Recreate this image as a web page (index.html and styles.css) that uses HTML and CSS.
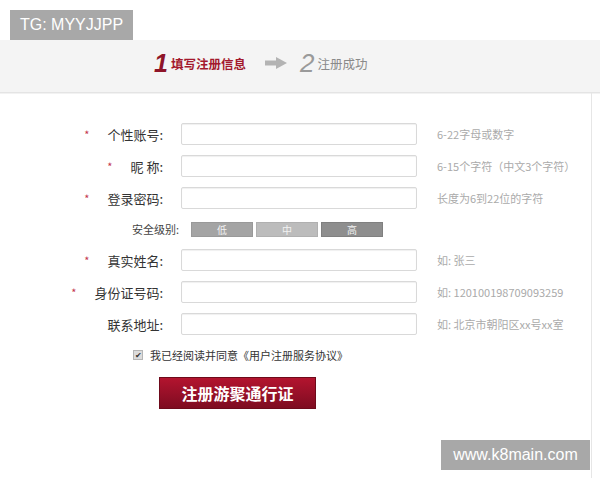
FILE: index.html
```html
<!DOCTYPE html>
<html lang="zh-CN">
<head>
<meta charset="utf-8">
<link rel="stylesheet" href="styles.css">
</head>
<body>
<div class="top">
  <span class="tg">TG: MYYJJPP</span>
</div>
<div class="steps">
  <span class="num num-on">1</span><span class="step-on">填写注册信息</span>
  <svg class="arrow" width="22" height="12" viewBox="0 0 22 12"><rect x="0" y="3.5" width="12" height="5" fill="#b3b3b3"/><polygon points="11,0 22,6 11,12" fill="#b3b3b3"/></svg>
  <span class="num num-off">2</span><span class="step-off">注册成功</span>
</div>
<div class="main">
  <div class="row">
    <label class="lbl"><span class="star">*</span>个性账号:</label>
    <span class="field"></span>
    <span class="hint">6-22字母或数字</span>
  </div>
  <div class="row">
    <label class="lbl"><span class="star">*</span>昵 称:</label>
    <span class="field"></span>
    <span class="hint">6-15个字符（中文3个字符）</span>
  </div>
  <div class="row">
    <label class="lbl"><span class="star">*</span>登录密码:</label>
    <span class="field"></span>
    <span class="hint">长度为6到22位的字符</span>
  </div>
  <div class="row sec">
    <span class="sec-lbl">安全级别:</span>
    <span class="lvl lvl-low">低</span>
    <span class="lvl lvl-mid">中</span>
    <span class="lvl lvl-high">高</span>
  </div>
  <div class="row">
    <label class="lbl"><span class="star">*</span>真实姓名:</label>
    <span class="field"></span>
    <span class="hint">如: 张三</span>
  </div>
  <div class="row">
    <label class="lbl"><span class="star">*</span>身份证号码:</label>
    <span class="field"></span>
    <span class="hint">如: 120100198709093259</span>
  </div>
  <div class="row">
    <label class="lbl">联系地址:</label>
    <span class="field"></span>
    <span class="hint">如: 北京市朝阳区xx号xx室</span>
  </div>
  <div class="agree">
    <span class="check">✔</span>
    <span>我已经阅读并同意《用户注册服务协议》</span>
  </div>
  <div class="btn-row">
    <span class="btn">注册游聚通行证</span>
  </div>
</div>
<div class="wm">www.k8main.com</div>
</body>
</html>
```
FILE: styles.css
```css
html, body {
  margin: 0;
  padding: 0;
  background: #fff;
}
body {
  width: 600px;
  height: 480px;
  overflow: hidden;
  position: relative;
  font-family: "Noto Sans CJK SC", "Liberation Sans", sans-serif;
  color: #333;
}
.top {
  height: 40px;
  padding-left: 10px;
  padding-top: 10px;
  box-sizing: border-box;
}
.tg {
  display: inline-flex;
  align-items: center;
  height: 30px;
  padding: 0 10px;
  background: #a8a8a8;
  color: #fff;
  font-family: "Liberation Sans", sans-serif;
  font-size: 16px;
}
.steps {
  height: 53px;
  background: #f4f4f4;
  border-bottom: 1px solid #e4e4e4;
  box-shadow: 0 1px 0 #f2f2f2;
  display: flex;
  align-items: center;
  padding-left: 154px;
  padding-bottom: 6px;
  box-sizing: border-box;
}
.num {
  font-family: "Liberation Sans", sans-serif;
  font-style: italic;
  font-weight: bold;
  font-size: 25px;
  line-height: 1;
  margin-right: 3px;
}
.num-on { color: #8e1428; }
.num-off { color: #9a9a9a; font-weight: normal; font-size: 26px; }
.step-on {
  color: #a3192d;
  font-weight: bold;
  font-size: 12.5px;
}
.step-off {
  color: #8a8a8a;
  font-size: 12.5px;
}
.arrow {
  margin-left: 19px;
  margin-right: 13px;
}
.main {
  width: 592px;
  height: 385px;
  border-right: 1px solid #e6e6e6;
  padding-top: 25px;
  box-sizing: border-box;
  overflow: hidden;
}
.row {
  display: flex;
  align-items: center;
  height: 32px;
  white-space: nowrap;
}
.lbl {
  width: 163px;
  flex: none;
  text-align: right;
  font-size: 13px;
  color: #333;
}
.star {
  color: #c4354a;
  font-size: 11px;
  margin-right: 18px;
  vertical-align: 1px;
}
.field {
  margin-left: 18px;
  width: 236px;
  height: 22px;
  flex: none;
  box-sizing: border-box;
  border: 1px solid #d9d9d9;
  border-radius: 2px;
  background: #fff;
  box-shadow: inset 0 1px 1px #f0f0f0;
}
.hint {
  margin-left: 20px;
  font-size: 11px;
  color: #aaa;
}
.sec {
  height: 30px;
  padding-left: 132px;
}
.sec-lbl {
  font-size: 11px;
  color: #444;
  width: 59px;
  flex: none;
}
.lvl {
  width: 62px;
  height: 15px;
  margin-right: 3px;
  box-sizing: border-box;
  display: flex;
  align-items: center;
  justify-content: center;
  font-size: 10px;
  color: #f2f2f2;
}
.lvl-low { background: #a4a4a4; border: 1px solid #999; }
.lvl-mid { background: #bcbcbc; border: 1px solid #b0b0b0; }
.lvl-high { background: #8e8e8e; border: 1px solid #808080; }
.agree {
  display: flex;
  align-items: center;
  height: 20px;
  margin-top: 5px;
  padding-left: 133px;
  font-size: 11px;
  color: #333;
}
.check {
  width: 10px;
  height: 10px;
  box-sizing: border-box;
  background: #dcdcdc;
  border: 1px solid #b5b5b5;
  font-size: 8px;
  line-height: 8px;
  color: #333;
  display: flex;
  align-items: center;
  justify-content: center;
  margin-right: 7px;
}
.btn-row {
  padding-left: 159px;
  margin-top: 12px;
}
.btn {
  display: flex;
  align-items: center;
  justify-content: center;
  width: 157px;
  height: 32px;
  box-sizing: border-box;
  background: linear-gradient(#b3142f, #7e0c21);
  border: 1px solid #6e0a1b;
  color: #fff;
  font-size: 16px;
  font-weight: bold;
}
.wm {
  position: absolute;
  left: 441px;
  top: 440px;
  width: 149px;
  height: 30px;
  background: #a8a8a8;
  color: #fff;
  font-family: "Liberation Sans", sans-serif;
  font-size: 16px;
  display: flex;
  align-items: center;
  justify-content: center;
}
```
